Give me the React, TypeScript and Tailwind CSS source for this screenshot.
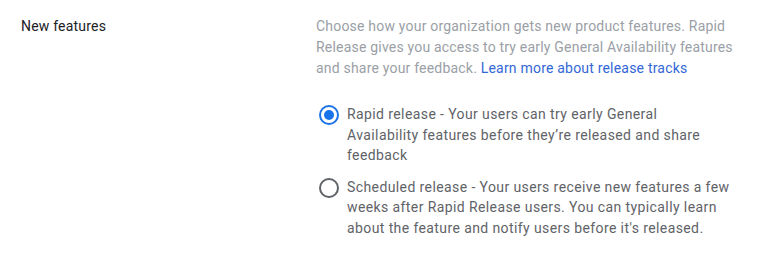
import { useState } from "react";

const options = [
  {
    id: "rapid",
    lines: [
      "Rapid release - Your users can try early General",
      "Availability features before they\u2019re released and share",
      "feedback",
    ],
  },
  {
    id: "scheduled",
    lines: [
      "Scheduled release - Your users receive new features a few",
      "weeks after Rapid Release users. You can typically learn",
      "about the feature and notify users before it's released.",
    ],
  },
];

function Radio({ checked }: { checked: boolean }) {
  return (
    <div
      className={`w-5 h-5 rounded-full border-2 flex items-center justify-center shrink-0 ${
        checked ? "border-[#1a73e8]" : "border-[#5f6368]"
      }`}
    >
      {checked && <div className="w-2.5 h-2.5 rounded-full bg-[#1a73e8]" />}
    </div>
  );
}

export default function App() {
  const [selected, setSelected] = useState("rapid");

  return (
    <div
      className="w-[768px] h-[254px] bg-white flex text-[14px] tracking-[0.2px]"
      style={{ fontFamily: "Roboto, sans-serif" }}
    >
      {/* Label */}
      <div className="w-[316px] pl-[21px] pt-[16px] text-[#202124] leading-[21px] shrink-0">
        New features
      </div>

      {/* Content */}
      <div className="w-[424px] pt-[16px]">
        <div className="text-[#9aa0a6] leading-[21px]">
          Choose how your organization gets new product features. Rapid Release gives you access to try
          early General Availability features and share your feedback.{" "}
          <a className="text-[#3367d6]" href="#">
            Learn more about release tracks
          </a>
        </div>

        <div className="mt-[26px] flex flex-col gap-[12px]">
          {options.map((o) => (
            <label
              key={o.id}
              className="flex gap-[8px] pl-[3px] cursor-pointer"
              onClick={() => setSelected(o.id)}
            >
              <Radio checked={selected === o.id} />
              <span className="text-[#5f6368] leading-[20.5px] tracking-[0.4px] w-[392px] -mt-[1px] whitespace-nowrap">
                {o.lines.map((l, i) => (
                  <span key={i} className="block">
                    {l}
                  </span>
                ))}
              </span>
            </label>
          ))}
        </div>
      </div>
    </div>
  );
}
